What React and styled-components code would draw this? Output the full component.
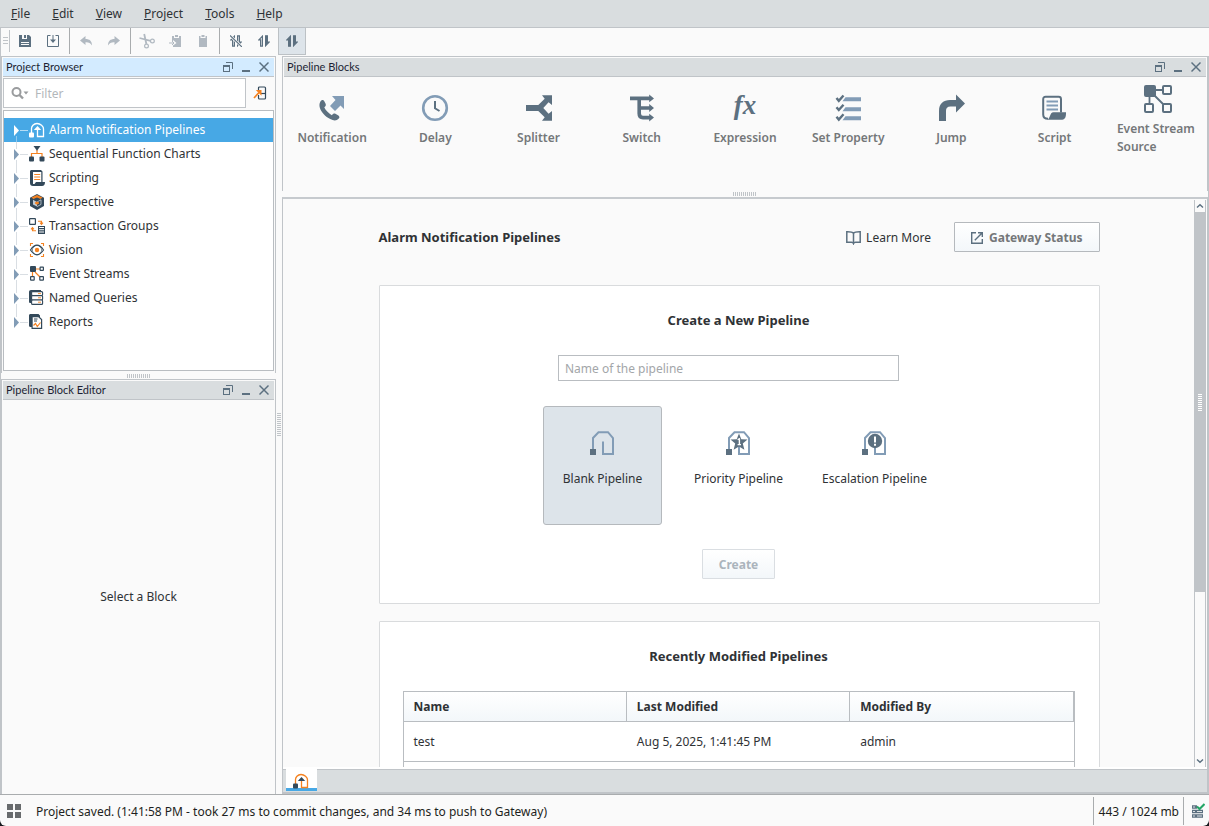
import React, { useState } from 'react';
import styled, { createGlobalStyle } from 'styled-components';

const GlobalStyle = createGlobalStyle`
  * {
    box-sizing: border-box;
  }

  body {
    margin: 0;
    background-color: #15181c;
    color: #2f3235;
    font-family: 'Noto Sans', 'Open Sans', sans-serif;
    font-size: 12px;
    line-height: 18px;
  }

  button, input {
    font: inherit;
    color: inherit;
  }

  svg {
    display: block;
    flex: none;
  }
`;

const Window = styled.div`
  display: flex;
  flex-direction: column;
  height: 100vh;
  background-color: #fafafa;
  border-radius: 0 0 6px 6px;
  overflow: hidden;
`;

const MenuBar = styled.nav`
  display: flex;
  height: 28px;
  flex: none;
  background-color: #d9dddf;
  border-bottom: 1px solid #c0c4c8;
`;

const MenuItem = styled.button`
  padding: 0 11px;
  border: none;
  background: none;

  &:first-letter {
    text-decoration: underline;
  }
`;

const ToolBar = styled.div`
  display: flex;
  flex: none;
  height: 28px;
  padding-left: 2px;
  border-left: 1px solid #c0c4c8;
`;

const ToolHandle = styled.div`
  width: 7px;
  height: 22px;
  margin: 2px 1px 0 0;
  padding: 7px 1px 0 0;
  border-right: 1px solid #c0c4c8;

  &:before {
    content: '';
    display: block;
    height: 7px;
    background: repeating-linear-gradient(#c0c4c8 0 1px, transparent 1px 3px);
  }
`;

const ToolButton = styled.button`
  display: flex;
  align-items: center;
  justify-content: center;
  width: 28px;
  height: 28px;
  margin-top: -1px;
  padding: 0;
  border: 1px solid ${(props) => (props.$active ? '#bcc1c5' : 'transparent')};
  background-color: ${(props) => (props.$active ? '#dde4ea' : 'transparent')};
`;

const ToolSeparator = styled.div`
  width: 1px;
  height: 26px;
  margin: 0 2px;
  background-color: #a9acae;
`;

const Main = styled.main`
  display: flex;
  flex: 1;
  min-height: 0;
  border: solid #c0c4c8;
  border-width: 0 1px;
`;

const Column = styled.div`
  display: flex;
  flex-direction: column;
  min-width: 0;
  flex: ${(props) => (props.$width ? `0 0 ${props.$width}` : '1')};
`;

const Splitter = styled.div`
  display: flex;
  align-items: center;
  justify-content: center;
  flex: 0 0 6px;

  &:before {
    content: '';
    width: ${(props) => (props.$vertical ? '4px' : '24px')};
    height: ${(props) => (props.$vertical ? '24px' : '4px')};
    background: repeating-linear-gradient(
      ${(props) => (props.$vertical ? '180deg' : '90deg')},
      #c0c4c8 0 1px,
      transparent 1px 2px
    );
  }
`;

const PanelBox = styled.section`
  display: flex;
  flex-direction: column;
  min-height: 0;
  flex: ${(props) => (props.$height ? `0 0 ${props.$height}` : '1')};
  padding: 1px;
  border: 1px solid #c0c4c8;
  border-bottom: none;
`;

const PanelHeader = styled.header`
  display: flex;
  align-items: center;
  flex: none;
  height: 19px;
  padding: 0 5px 0 3px;
  background-color: ${(props) => (props.$focused ? '#d3ebff' : '#d9dddf')};
  border-bottom: 1px solid #c0c4c8;
`;

const PanelTitle = styled.h2`
  flex: 1;
  margin: 0;
  color: #1c1f33;
  font-family: Lato, 'Noto Sans', sans-serif;
  font-size: 11px;
  font-weight: 400;
`;

const PanelButton = styled.button`
  width: 10px;
  height: 12px;
  margin-left: 8px;
  padding: 0;
  border: none;
  background: none;
`;

const FilterRow = styled.div`
  display: flex;
  flex: none;
  height: 33px;
  padding: 1px 0 2px;
`;

const FilterBox = styled.label`
  display: flex;
  align-items: center;
  flex: 1;
  gap: 6px;
  padding-left: 7px;
  background-color: #fff;
  border: 1px solid #c0c4c8;
`;

const FilterInput = styled.input`
  flex: 1;
  min-width: 0;
  padding: 2px 0 0;
  border: none;
  outline: none;

  &::placeholder {
    color: #b3b7bb;
  }
`;

const LocateButton = styled.button`
  width: 28px;
  padding: 0 7px;
  border: none;
  background: none;
`;

const Tree = styled.ul`
  flex: 1;
  margin: 0 0 1px;
  padding: 7px 0 0;
  list-style: none;
  background-color: #fff;
  border: 1px solid #b9bdc1;
`;

const TreeRow = styled.button`
  display: flex;
  align-items: center;
  width: 100%;
  height: 24px;
  padding: 0 0 0 9px;
  border: none;
  text-align: left;
  color: ${(props) => (props.$selected ? '#fff' : '#2f3235')};
  background-color: ${(props) => (props.$selected ? '#47a8e5' : 'transparent')};
`;

const TreeLabel = styled.span`
  margin-left: 4px;
`;

const EmptyEditor = styled.div`
  display: flex;
  align-items: center;
  justify-content: center;
  flex: 1;
`;

const BlockGrid = styled.div`
  display: grid;
  grid-template-columns: repeat(9, 1fr);
  gap: 7px;
  height: 87px;
`;

const Block = styled.button`
  display: flex;
  flex-direction: column;
  align-items: center;
  justify-content: center;
  gap: 7px;
  padding: 0;
  border: none;
  background: none;
  color: #747779;
  font-weight: 600;
`;

const BlockLabel = styled.span`
  max-width: 82px;
  text-align: left;
`;

const Workspace = styled.section`
  display: flex;
  flex-direction: column;
  flex: 1;
  min-height: 0;
  border: 1px solid #c0c4c8;
  border-top: 2px solid #c6cace;
  border-bottom: 2px solid #c0c4c8;
`;

const Viewport = styled.div`
  display: flex;
  flex: 1;
  min-height: 0;
  padding: 1px 1px 0 1px;
  border-bottom: 2px solid #fff;
`;

const Page = styled.div`
  flex: 1;
  padding: 22px 24px 0;
  overflow-y: auto;
  scrollbar-width: none;
`;

const PageInner = styled.div`
  display: flex;
  flex-direction: column;
  gap: 17px;
  max-width: 721px;
  margin: 0 auto;
`;

const PageHead = styled.div`
  display: flex;
  align-items: center;
  margin-bottom: 16px;
`;

const PageTitle = styled.h1`
  flex: 1;
  margin: 0;
  font-size: 13px;
  font-weight: 700;
`;

const LearnLink = styled.a`
  display: flex;
  align-items: center;
  gap: 5px;
  margin-right: 23px;
  padding-top: 1px;
  color: inherit;
  text-decoration: none;
`;

const PushButton = styled.button`
  display: flex;
  align-items: center;
  justify-content: center;
  gap: 6px;
  height: 30px;
  padding: 1px 16px 0;
  border: 1px solid #b5b9bd;
  border-radius: 1px;
  background: linear-gradient(#fff, #f3f7fa);
  color: #747779;
  font-weight: 700;

  &:disabled {
    border-color: #dadee2;
    color: #abb4bc;
  }
`;

const Card = styled.section`
  display: flex;
  flex-direction: column;
  align-items: center;
  padding: 25px 24px 24px 23px;
  background-color: #fff;
  border: 1px solid #d9dbdd;
  border-radius: 1px;
`;

const CardTitle = styled.h2`
  margin: 0 0 26px;
  font-size: 13px;
  font-weight: 700;
`;

const NameInput = styled.input`
  width: 341px;
  height: 26px;
  margin: 0 20px 25px 0;
  padding: 0 6px;
  background-color: #fff;
  border: 1px solid #b9bdc1;

  &::placeholder {
    color: #a3a6a9;
  }
`;

const Options = styled.div`
  display: flex;
  gap: 17px;
  margin-bottom: 24px;
`;

const Option = styled.label`
  position: relative;
  display: flex;
  flex-direction: column;
  align-items: center;
  gap: 15px;
  width: 119px;
  height: 119px;
  padding-top: 24px;
  border: 1px solid ${(props) => (props.$checked ? '#b5b9bd' : 'transparent')};
  border-radius: 3px;
  background-color: ${(props) => (props.$checked ? '#dde4ea' : 'transparent')};
`;

const OptionRadio = styled.input`
  position: absolute;
  inset: 0;
  margin: 0;
  opacity: 0;
`;

const TableFrame = styled.div`
  width: 100%;
  min-height: 200px;
  border: 1px solid #b9bdc1;
`;

const Table = styled.table`
  width: 100%;
  table-layout: fixed;
  border-collapse: separate;
  border-spacing: 0;
  text-align: left;

  th {
    height: 30px;
    padding: 0 10px;
    background: linear-gradient(#fff, #f3f7fa);
    border-right: 1px solid #b9bdc1;
    border-bottom: 1px solid #b9bdc1;
    font-weight: 700;
  }

  td {
    height: 40px;
    padding: 0 10px;
    border-bottom: 1px solid #b9bdc1;
  }
`;

const ScrollBar = styled.div`
  display: flex;
  flex-direction: column;
  flex: 0 0 12px;
  border: solid #c0c4c8;
  border-width: 0 1px;
`;

const ScrollButton = styled.button`
  display: flex;
  align-items: center;
  justify-content: center;
  height: 12px;
  padding: 0;
  border: none;
  background: none;
`;

const ScrollTrack = styled.div`
  flex: 1;
`;

const ScrollThumb = styled.div`
  display: flex;
  align-items: center;
  justify-content: center;
  height: 70%;
  background-color: #c0c4c8;

  &:before {
    content: '';
    width: 4px;
    height: 17px;
    background: repeating-linear-gradient(#fff 0 1px, transparent 1px 2px);
  }
`;

const TabBar = styled.div`
  display: flex;
  flex: none;
  height: 23px;
  padding-left: 3px;
  background-color: #d9dddf;
  border-top: 1px solid #c0c4c8;
`;

const Tab = styled.button`
  width: 31px;
  height: 22px;
  margin-top: -1px;
  padding: 4px 7px 0;
  border: none;
  border-bottom: 3px solid #47a8e5;
  background-color: #fff;
`;

const StatusBar = styled.footer`
  display: flex;
  align-items: center;
  flex: none;
  height: 32px;
  padding: 0 4px 0 7px;
  border-top: 1px solid #a9acae;
  color: #1d1f21;
`;

const StatusText = styled.span`
  flex: 1;
  margin-left: 15px;
  padding-top: 2px;
`;

const Memory = styled.span`
  display: flex;
  align-items: center;
  height: 28px;
  margin-right: 7px;
  padding: 2px 4px 0 5px;
  border: solid #a9acae;
  border-width: 0 1px;
`;

const SLATE = '#5c7080';
const NAVY = '#33495a';
const STEEL = '#829cb6';
const ORANGE = '#f58220';
const MUTED = '#b1b9c1';

const Svg = ({ size = 16, width, height, children }) => (
  <svg
    width={width || size}
    height={height || size}
    viewBox={`0 0 ${width || size} ${height || size}`}
    fill="none"
    aria-hidden="true"
  >
    {children}
  </svg>
);

// Toolbar
const SaveIcon = () => (
  <Svg size={12}>
    <path d="M0 0H3V4H8V0H10L12 2V12H0ZM2 7V8H10V7ZM2 9V10H10V9Z" fill={SLATE} fillRule="evenodd" />
    <path d="M5 0H7V3H5Z" fill={SLATE} />
  </Svg>
);

const ImportIcon = () => (
  <Svg width={12} height={12}>
    <path d="M3.5 .5H.5V11.5H11.5V.5H8.5" stroke={SLATE} />
    <path d="M5.5 0H6.5V4.5H9L6 8L3 4.5H5.5Z" fill={SLATE} />
  </Svg>
);

const UndoIcon = ({ flip }) => (
  <Svg width={12} height={10}>
    <path
      d="M0 4.5L5.5 0V3C9.5 3 12 5 12 9.5C10.5 7 8.5 6 5.5 6.2V9Z"
      fill={MUTED}
      transform={flip ? 'translate(12 0) scale(-1 1)' : undefined}
    />
  </Svg>
);

const CutIcon = () => (
  <Svg size={16}>
    <circle cx="7.5" cy="13" r="1.9" stroke={MUTED} strokeWidth="1.2" />
    <circle cx="13.4" cy="8" r="1.9" stroke={MUTED} strokeWidth="1.2" />
    <path d="M5.2 1L7.4 11M0.5 5L11.5 7.8" stroke={MUTED} strokeWidth="1.8" />
  </Svg>
);

const PasteArrowIcon = () => (
  <Svg width={12} height={12}>
    <path d="M3 1H5V3H10V1H12V12H4V10.5L7.5 8L4 5V6H3Z" fill={MUTED} />
    <path d="M6 0H9V2H6Z" fill={MUTED} />
    <path d="M0 8H5M3 6L5 8L3 10" stroke={MUTED} />
  </Svg>
);

const ClipboardIcon = () => (
  <Svg width={8} height={12}>
    <path d="M0 1H1.5V3H6.5V1H8V12H0Z" fill={MUTED} />
    <path d="M2.5 0H5.5V2H2.5Z" fill={MUTED} />
  </Svg>
);

const ArrowsIcon = ({ left, right, slash }) => (
  <Svg width={12} height={12}>
    <path
      d="M0.9 4.8L4.4 1.2V11.2H2.6V4.8Z"
      stroke={SLATE}
      strokeWidth="1.2"
      fill={left ? SLATE : 'none'}
    />
    <path
      d="M11.1 7.2L7.6 10.8V0.8H9.4V7.2Z"
      stroke={SLATE}
      strokeWidth="1.2"
      fill={right ? SLATE : 'none'}
    />
    {slash && <path d="M0 .5L12 12" stroke="#fafafa" strokeWidth="2.6" />}
    {slash && <path d="M0 .5L12 12" stroke={SLATE} strokeWidth="1.2" />}
  </Svg>
);

// Panel title bars
const RestoreIcon = () => (
  <Svg width={10} height={12}>
    <path d="M3 1.5H9.5V8" stroke={SLATE} />
    <path d="M0 4H7V11H0ZM1 6V10H6V6Z" fill={SLATE} fillRule="evenodd" />
  </Svg>
);

const MinimizeIcon = () => (
  <Svg width={10} height={12}>
    <path d="M1 9H9V11H1Z" fill={SLATE} />
  </Svg>
);

const CloseIcon = () => (
  <Svg width={10} height={12}>
    <path d="M0.5 1.5L9.5 10.5M9.5 1.5L0.5 10.5" stroke={SLATE} strokeWidth="1.5" />
  </Svg>
);

const SearchIcon = () => (
  <Svg width={18} height={14}>
    <circle cx="5.5" cy="6" r="4" stroke="#9a9c9e" strokeWidth="2" />
    <path d="M8.5 9L12 12.5" stroke="#9a9c9e" strokeWidth="2.4" />
    <path d="M12.5 5.5H17.5L15 8.5Z" fill="#9a9c9e" />
  </Svg>
);

const LocateIcon = () => (
  <Svg width={14} height={16}>
    <path d="M5.5 5V3C5.5 2.4 5.9 2 6.5 2H11.5C12.1 2 12.5 2.4 12.5 3V13C12.5 13.6 12.1 14 11.5 14H6.5C5.9 14 5.5 13.6 5.5 13V10" stroke={NAVY} strokeWidth="1.2" />
    <path d="M7.5 8.5H12.5" stroke={NAVY} strokeWidth="1.2" />
    <path d="M1 13L6 7.5" stroke={ORANGE} strokeWidth="1.7" />
    <path d="M2.8 5H8.5V10.7Z" fill={ORANGE} />
  </Svg>
);

// Project tree
const Branch = ({ selected, first, last }) => (
  <Svg width={16} height={24}>
    {!first && <path d="M3.5 0V7" stroke="#d9dee3" />}
    {!last && <path d="M3.5 18V24" stroke={selected ? '#8fc8ee' : '#d9dee3'} />}
    <path d="M7 12.5H15" stroke={selected ? '#b5dcf5' : '#d9dee3'} />
    <path d="M1 7L6 12.5L1 18Z" fill={selected ? '#fff' : STEEL} />
  </Svg>
);

const PipelineIcon = ({ line = ORANGE, solid = NAVY }) => (
  <Svg>
    <path
      d="M2.5 11V6.5C2.5 4.5 4.5 1.5 8 1.5S14.5 4.5 14.5 7V14.5H8.5V7"
      stroke={line}
      strokeWidth="1.3"
    />
    <path d="M4.8 8L8.5 4L12.2 8Z" fill={solid} />
    <rect x="0" y="10.5" width="5" height="5" rx="1" fill={solid} />
  </Svg>
);

const SfcIcon = () => (
  <Svg>
    <path d="M8 4V7.5M2.5 11V7.5H13V11" stroke={ORANGE} strokeWidth="1.2" />
    <path d="M4.5 0H11.5L8 4.8Z" fill={NAVY} />
    <rect x="0" y="10.5" width="5" height="5" rx="1" fill={NAVY} />
    <rect x="10.5" y="10.5" width="5" height="5" rx="1" fill={NAVY} />
  </Svg>
);

const ScriptingIcon = () => (
  <Svg>
    <path d="M1 1.5C1 .6 1.6 0 2.5 0H12L13.5 1.5V12H16C16 14.5 15 16 13 16H4C2 16 1 15 1 13Z" fill={NAVY} />
    <path d="M4 2H12.3V12H7L5.5 14H4Z" fill="#fff" />
    <path d="M5.2 4.5H11.2M5.2 7H11.2M5.2 9.5H11.2" stroke={ORANGE} strokeWidth="1.2" />
  </Svg>
);

const PerspectiveIcon = () => (
  <Svg>
    <path d="M8 0L15 3.7V12L8 16L1 12V3.7Z" fill={NAVY} />
    <path d="M8 1L13.6 3.6L11.5 5L8 3.4L4.5 5L2.4 3.6Z" fill={ORANGE} />
    <path d="M4 5.8L8 8V12.6L4 10.4Z" fill="#c3ccd3" />
    <path d="M8 3.9L11.5 5.6L8 7.2L4.5 5.6Z" fill={NAVY} />
    <path d="M8 8L12 5.8V10.4L8 12.6" stroke="#c3ccd3" strokeWidth="0.8" />
    <path d="M6 8.6L8 7.6L10 8.6V9.6L8 10.8L6 9.6Z" fill={ORANGE} />
  </Svg>
);

const TransactionIcon = () => (
  <Svg>
    <rect x="0.6" y="0.6" width="5.8" height="5.8" rx="0.5" stroke={NAVY} strokeWidth="1.2" />
    <path d="M9 8H16V16H9ZM10 9V10H15V9ZM10 11.2V12.2H15V11.2ZM10 13.5V14.5H15V13.5Z" fill={NAVY} fillRule="evenodd" />
    <path d="M9 3.2H12.5V6M11 4.6L12.5 6.3L14 4.6" stroke={ORANGE} strokeWidth="1.1" />
    <path d="M7 12.8H3.5V10M2 11.4L3.5 9.7L5 11.4" stroke={ORANGE} strokeWidth="1.1" />
  </Svg>
);

const VisionIcon = () => (
  <Svg>
    <path d="M1.5 4V1.5H4M12 1.5H14.5V4M14.5 12V14.5H12M4 14.5H1.5V12" stroke={ORANGE} strokeWidth="1.1" />
    <path d="M1.5 8C3.5 5 5.5 3.2 8 3.2S12.5 5 14.5 8C12.5 11 10.5 12.8 8 12.8S3.5 11 1.5 8Z" stroke={NAVY} strokeWidth="1.2" />
    <circle cx="8" cy="8" r="4.6" stroke={NAVY} strokeWidth="0.6" />
    <circle cx="8" cy="8" r="2.2" fill={ORANGE} />
  </Svg>
);

const EventStreamsIcon = () => (
  <Svg>
    <path d="M6 3H11M3.5 6V10.5M6 6L11 11" stroke={ORANGE} strokeWidth="1.2" />
    <rect x="1" y="0" width="6" height="6" rx="1" fill={NAVY} />
    <rect x="11.1" y="1.1" width="3.3" height="3.3" rx="0.4" stroke={NAVY} strokeWidth="1.2" />
    <rect x="1.6" y="10.6" width="3.6" height="3.6" rx="0.4" stroke={NAVY} strokeWidth="1.2" />
    <rect x="10.8" y="10.6" width="3.6" height="3.6" rx="0.4" stroke={NAVY} strokeWidth="1.2" />
  </Svg>
);

const QueriesIcon = () => (
  <Svg>
    <path d="M0 2C0 .8.8 0 2 0H12V2H3V13H1.5C.6 13 0 12.5 0 11.5Z" fill={NAVY} />
    <rect x="2.6" y="1.6" width="11" height="4" rx="1" fill="#fff" stroke={NAVY} strokeWidth="1.1" />
    <rect x="2.6" y="5.6" width="11" height="4.4" rx="1" fill="#fff" stroke={NAVY} strokeWidth="1.1" />
    <rect x="2.6" y="10" width="11" height="4.4" rx="1" fill="#fff" stroke={NAVY} strokeWidth="1.1" />
    <path d="M9 3.6H12M9 7.8H12M9 12.2H12" stroke={ORANGE} strokeWidth="0.9" />
  </Svg>
);

const ReportsIcon = () => (
  <Svg>
    <path d="M0 1.5C0 .6.6 0 1.5 0H9.5L11 1.5V3H3V13H1.5C.6 13 0 12.4 0 11.5Z" fill={NAVY} />
    <path d="M3.1 2.6H9.5L12.6 5.6V14.4H3.1Z" fill="#fff" stroke={NAVY} strokeWidth="1.2" />
    <path d="M5 5H8.5M5 7H8" stroke={NAVY} />
    <path d="M4.5 11.5L6.5 9.5L8.3 12.5L11.5 8.5" stroke={ORANGE} strokeWidth="1.2" />
  </Svg>
);

// Pipeline blocks
const NotificationIcon = () => (
  <Svg size={28}>
    <path
      d="M2.2 8C3.5 5.6 5.3 5.6 6.3 7.2L7.6 9.8C8.2 11.3 7.7 12.3 6.3 13.3C7.4 16.2 10.6 19.4 13.8 21.2C15 19.5 16.2 19.2 17.4 19.7L20 21.2C21.6 22.3 21.8 23.4 20.8 24.6C18.6 27 15.8 27 12.2 25.1C7.4 22.5 3.4 18.6 1.9 14C1.2 11.7 1.3 9.8 2.2 8Z"
      fill={SLATE}
    />
    <path d="M14 2H26V15L22.5 11.5L17 17L12 12L17.5 6Z" fill={STEEL} />
  </Svg>
);

const DelayIcon = () => (
  <Svg size={28}>
    <circle cx="14" cy="14" r="11.8" stroke={STEEL} strokeWidth="2.6" />
    <path d="M14 7V14.3L18.5 17" stroke={SLATE} strokeWidth="2" />
  </Svg>
);

const SplitterIcon = () => (
  <Svg size={28}>
    <path d="M1 11H13.3L19.7 4.8L17 1.2H27V11L23.6 8.2L18.3 14L23.6 19.8L27 17V26.8H17L19.7 23.2L13.3 17H1Z" fill={SLATE} />
  </Svg>
);

const SwitchIcon = () => (
  <Svg size={28}>
    <path d="M2 4.4H22M11.2 5V19.5C11.2 22.5 12.5 23.6 15 23.6H22M11.2 14H22" stroke={SLATE} strokeWidth="3.6" />
    <path d="M21.2 0.5L26 4.4L21.2 8.3ZM21.2 10.1L26 14L21.2 17.9ZM21.2 19.7L26 23.6L21.2 27.5Z" fill={SLATE} />
  </Svg>
);

const FxText = styled.span`
  width: 28px;
  height: 28px;
  font-family: 'Liberation Serif', serif;
  font-size: 27px;
  font-style: italic;
  font-weight: 700;
  line-height: 22px;
  text-align: center;
  color: ${SLATE};
`;

const PropertyIcon = () => (
  <Svg size={28}>
    <path d="M11.5 3.2H27V7.2H8.5ZM11.5 13.2H27V17.2H8.5ZM11.5 22.2H27V26.2H8.5Z" fill={STEEL} />
    <path d="M2.5 4L4.8 6.8L9.5 1.5M2.5 13.2L4.8 16L9.5 10.7M2.5 22.8L4.8 25.6L9.5 20.3" stroke={SLATE} strokeWidth="2.4" />
  </Svg>
);

const JumpIcon = () => (
  <Svg size={28}>
    <path d="M2 27V17C2 9.5 6.5 6 13 6H19V0.5L28 9.5L19 18.5V12.5H13.5C10.3 12.5 9 14 9 17V27Z" fill={SLATE} />
  </Svg>
);

const ScriptIcon = () => (
  <Svg size={28}>
    <path d="M7 24.8C4 24.8 2.2 23.4 2.2 20.5V5.2C2.2 3.6 3 2.8 4.6 2.8H17.6C19.2 2.8 20 3.6 20 5.2V18.5" stroke={SLATE} strokeWidth="2" />
    <path d="M6 25.8C9.5 24.8 8.5 18.2 12.5 18.2H25V19.5C25 23.8 23.5 25.8 20 25.8H6Z" fill={SLATE} />
    <path d="M5.5 7.5H17M5.5 11.5H17M5.5 15.5H17" stroke={STEEL} strokeWidth="2" />
  </Svg>
);

const StreamIcon = () => (
  <Svg width={30} height={28}>
    <path d="M10 5H20M6.5 9V19M10 9L21 20" stroke={SLATE} strokeWidth="1.8" />
    <rect x="1" y="0" width="12" height="12" rx="2" fill={SLATE} />
    <rect x="20" y="1" width="8" height="8" rx="1" stroke={SLATE} strokeWidth="2" />
    <rect x="2" y="19" width="8" height="8" rx="1" stroke={SLATE} strokeWidth="2" />
    <rect x="20" y="19" width="8" height="8" rx="1" stroke={SLATE} strokeWidth="2" />
  </Svg>
);

// Workspace page
const BookIcon = () => (
  <Svg width={15} height={14}>
    <path d="M7.5 2.2C6.5 1 4.5.7.8.8V11.3H5.5C6.5 11.3 7.2 11.8 7.5 12.6C7.8 11.8 8.5 11.3 9.5 11.3H14.2V.8C10.5.7 8.5 1 7.5 2.2ZM7.5 2.2V12.5" stroke={SLATE} strokeWidth="1.5" />
  </Svg>
);

const ExternalIcon = () => (
  <Svg size={12}>
    <path d="M5 .7H.7V11.3H11.3V7" stroke={SLATE} strokeWidth="1.4" />
    <path d="M7 .7H11.3V5M11 1L3.8 8.2" stroke={SLATE} strokeWidth="1.4" />
  </Svg>
);

const TemplateIcon = ({ badge }) => (
  <Svg width={26} height={24}>
    <path d="M3 18V7L8.5 1.2H18L23 7V23H13V10.5" stroke={STEEL} strokeWidth="2" />
    <rect x="0" y="18" width="6" height="6" fill={SLATE} />
    {badge === 'star' && (
      <path
        d="M13 2.5L15.3 8.3L21.5 8.6L16.8 12.6L18.4 18.8L13 15.4L7.6 18.8L9.2 12.6L4.5 8.6L10.7 8.3Z"
        fill={SLATE}
      />
    )}
    {badge === 'star' && <path d="M11.6 8.7L13.4 7.8V14M11.6 13.6H15" stroke="#fff" strokeWidth="1.4" />}
    {badge === 'alert' && <circle cx="13" cy="10" r="7.2" fill={SLATE} />}
    {badge === 'alert' && <path d="M13 5.5V11.5M13 12.7V14.7" stroke="#fff" strokeWidth="2" />}
  </Svg>
);

const Chevron = ({ down }) => (
  <Svg width={8} height={6}>
    <path d={down ? 'M1 1.5L4 4.3L7 1.5' : 'M1 4.5L4 1.7L7 4.5'} stroke={SLATE} strokeWidth="1.4" />
  </Svg>
);

const GridIcon = () => (
  <Svg size={14}>
    <path d="M0 0H6V6H0ZM8 0H14V6H8ZM0 8H6V14H0ZM8 8H14V14H8Z" fill="#686b6d" />
  </Svg>
);

const GatewayIcon = () => (
  <Svg width={14} height={16}>
    <path d="M1 4H6M1 8.5H12M1 13H12" stroke={SLATE} strokeWidth="3.4" />
    <path d="M2 4H4M2 8.5H4M2 13H4M6 8.5H11M6 13H11" stroke="#fff" strokeWidth="0.8" />
    <path d="M6 3.5L8.5 6L13.5 1" stroke="#23a566" strokeWidth="2" />
  </Svg>
);

const menus = ['File', 'Edit', 'View', 'Project', 'Tools', 'Help'];

const resources = [
  { name: 'Alarm Notification Pipelines', icon: PipelineIcon },
  { name: 'Sequential Function Charts', icon: SfcIcon },
  { name: 'Scripting', icon: ScriptingIcon },
  { name: 'Perspective', icon: PerspectiveIcon },
  { name: 'Transaction Groups', icon: TransactionIcon },
  { name: 'Vision', icon: VisionIcon },
  { name: 'Event Streams', icon: EventStreamsIcon },
  { name: 'Named Queries', icon: QueriesIcon },
  { name: 'Reports', icon: ReportsIcon },
];

const blocks = [
  { name: 'Notification', icon: <NotificationIcon /> },
  { name: 'Delay', icon: <DelayIcon /> },
  { name: 'Splitter', icon: <SplitterIcon /> },
  { name: 'Switch', icon: <SwitchIcon /> },
  { name: 'Expression', icon: <FxText>fx</FxText> },
  { name: 'Set Property', icon: <PropertyIcon /> },
  { name: 'Jump', icon: <JumpIcon /> },
  { name: 'Script', icon: <ScriptIcon /> },
  { name: 'Event Stream Source', icon: <StreamIcon /> },
];

const templates = [
  { name: 'Blank Pipeline' },
  { name: 'Priority Pipeline', badge: 'star' },
  { name: 'Escalation Pipeline', badge: 'alert' },
];

const recent = [{ name: 'test', modified: 'Aug 5, 2025, 1:41:45 PM', user: 'admin' }];

const Panel = ({ title, focused, height, children }) => (
  <PanelBox $height={height}>
    <PanelHeader $focused={focused}>
      <PanelTitle>{title}</PanelTitle>
      <PanelButton aria-label="Restore"><RestoreIcon /></PanelButton>
      <PanelButton aria-label="Minimize"><MinimizeIcon /></PanelButton>
      <PanelButton aria-label="Close"><CloseIcon /></PanelButton>
    </PanelHeader>
    {children}
  </PanelBox>
);

const App = () => {
  const [selected, setSelected] = useState('Alarm Notification Pipelines');
  const [template, setTemplate] = useState('Blank Pipeline');
  const [name, setName] = useState('');

  return (
    <Window>
      <GlobalStyle />
      <MenuBar>
        {menus.map((menu) => (
          <MenuItem key={menu}>{menu}</MenuItem>
        ))}
      </MenuBar>

      <ToolBar>
        <ToolHandle />
        <ToolButton aria-label="Save"><SaveIcon /></ToolButton>
        <ToolButton aria-label="Update project"><ImportIcon /></ToolButton>
        <ToolSeparator />
        <ToolButton aria-label="Undo"><UndoIcon /></ToolButton>
        <ToolButton aria-label="Redo"><UndoIcon flip /></ToolButton>
        <ToolSeparator />
        <ToolButton aria-label="Cut"><CutIcon /></ToolButton>
        <ToolButton aria-label="Copy"><PasteArrowIcon /></ToolButton>
        <ToolButton aria-label="Paste"><ClipboardIcon /></ToolButton>
        <ToolSeparator />
        <ToolButton aria-label="Comm off"><ArrowsIcon slash /></ToolButton>
        <ToolButton aria-label="Comm read-only"><ArrowsIcon right /></ToolButton>
        <ToolButton aria-label="Comm read/write" $active><ArrowsIcon left right /></ToolButton>
      </ToolBar>

      <Main>
        <Column $width="275px">
          <Panel title="Project Browser" focused height="317px">
            <FilterRow>
              <FilterBox>
                <SearchIcon />
                <FilterInput placeholder="Filter" aria-label="Filter" />
              </FilterBox>
              <LocateButton aria-label="Locate"><LocateIcon /></LocateButton>
            </FilterRow>
            <Tree>
              {resources.map(({ name: label, icon: Icon }, i) => {
                const active = label === selected;
                return (
                  <li key={label}>
                    <TreeRow $selected={active} onClick={() => setSelected(label)}>
                      <Branch selected={active} first={i === 0} last={i === resources.length - 1} />
                      {active && i === 0 ? <Icon line="#fff" solid="#fff" /> : <Icon />}
                      <TreeLabel>{label}</TreeLabel>
                    </TreeRow>
                  </li>
                );
              })}
            </Tree>
          </Panel>
          <Splitter />
          <Panel title="Pipeline Block Editor">
            <EmptyEditor>Select a Block</EmptyEditor>
          </Panel>
        </Column>

        <Splitter $vertical />

        <Column>
          <Panel title="Pipeline Blocks" height="135px">
            <BlockGrid>
              {blocks.map((block) => (
                <Block key={block.name}>
                  {block.icon}
                  <BlockLabel>{block.name}</BlockLabel>
                </Block>
              ))}
            </BlockGrid>
          </Panel>
          <Splitter />
          <Workspace>
            <Viewport>
              <Page>
                <PageInner>
                  <PageHead>
                    <PageTitle>Alarm Notification Pipelines</PageTitle>
                    <LearnLink href="#learn"><BookIcon />Learn More</LearnLink>
                    <PushButton><ExternalIcon />Gateway Status</PushButton>
                  </PageHead>

                  <Card>
                    <CardTitle>Create a New Pipeline</CardTitle>
                    <NameInput
                      placeholder="Name of the pipeline"
                      aria-label="Name of the pipeline"
                      value={name}
                      onChange={(e) => setName(e.target.value)}
                    />
                    <Options>
                      {templates.map((item) => (
                        <Option key={item.name} $checked={item.name === template}>
                          <OptionRadio
                            type="radio"
                            name="template"
                            checked={item.name === template}
                            onChange={() => setTemplate(item.name)}
                          />
                          <TemplateIcon badge={item.badge} />
                          {item.name}
                        </Option>
                      ))}
                    </Options>
                    <PushButton disabled={!name}>Create</PushButton>
                  </Card>

                  <Card>
                    <CardTitle>Recently Modified Pipelines</CardTitle>
                    <TableFrame>
                      <Table>
                        <thead>
                          <tr>
                            <th>Name</th>
                            <th>Last Modified</th>
                            <th>Modified By</th>
                          </tr>
                        </thead>
                        <tbody>
                          {recent.map((row) => (
                            <tr key={row.name}>
                              <td>{row.name}</td>
                              <td>{row.modified}</td>
                              <td>{row.user}</td>
                            </tr>
                          ))}
                        </tbody>
                      </Table>
                    </TableFrame>
                  </Card>
                </PageInner>
              </Page>
              <ScrollBar>
                <ScrollButton aria-label="Scroll up"><Chevron /></ScrollButton>
                <ScrollTrack><ScrollThumb /></ScrollTrack>
                <ScrollButton aria-label="Scroll down"><Chevron down /></ScrollButton>
              </ScrollBar>
            </Viewport>
            <TabBar>
              <Tab aria-label="Alarm Notification Pipelines"><PipelineIcon /></Tab>
            </TabBar>
          </Workspace>
        </Column>
      </Main>

      <StatusBar>
        <GridIcon />
        <StatusText>
          Project saved. (1:41:58 PM - took 27 ms to commit changes, and 34 ms to push to Gateway)
        </StatusText>
        <Memory>443 / 1024 mb</Memory>
        <GatewayIcon />
      </StatusBar>
    </Window>
  );
};

export default App;
